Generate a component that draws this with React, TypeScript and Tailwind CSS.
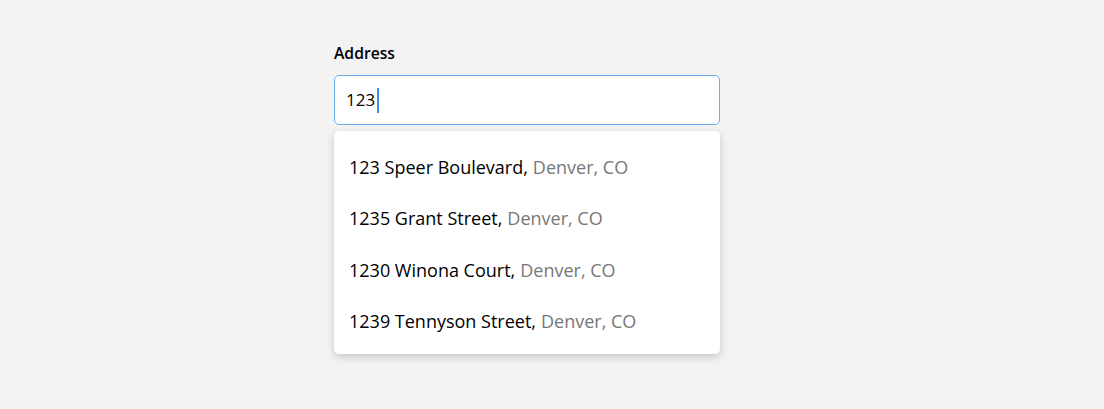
import React from "react";

const items = [
  ["123 Speer Boulevard,", "Denver, CO"],
  ["1235 Grant Street,", "Denver, CO"],
  ["1230 Winona Court,", "Denver, CO"],
  ["1239 Tennyson Street,", "Denver, CO"],
];

export default function App() {
  return (
    <div
      className="w-[1104px] h-[409px] bg-[#f3f3f3] flex justify-center"
      style={{ fontFamily: '"Open Sans", "Noto Sans", sans-serif' }}
    >
      <div className="w-[386px] ml-[-50px] pt-[43px]">
        <div className="text-[15.7px] leading-[21px] font-semibold text-black pb-[11px]">Address</div>
        <div className="h-[50px] rounded-[5px] border border-[#6aaef0] bg-white flex items-center pl-[11px]">
          <span className="text-[17px] text-black">123</span>
          <span className="w-[2px] h-[25px] bg-[#3b8ef0] ml-[2px]"></span>
        </div>
        <div className="mt-[6px] bg-white rounded-[5px] pt-[11px] pb-[7px] shadow-[0_3px_8px_rgba(0,0,0,0.18)]">
          {items.map(([a, b]) => (
            <div key={a} className="h-[51.3px] flex items-center pl-[15px] text-[18px]">
              <span className="text-black">{a}</span>
              <span className="text-[#777] ml-[5px]">{b}</span>
            </div>
          ))}
        </div>
      </div>
    </div>
  );
}
